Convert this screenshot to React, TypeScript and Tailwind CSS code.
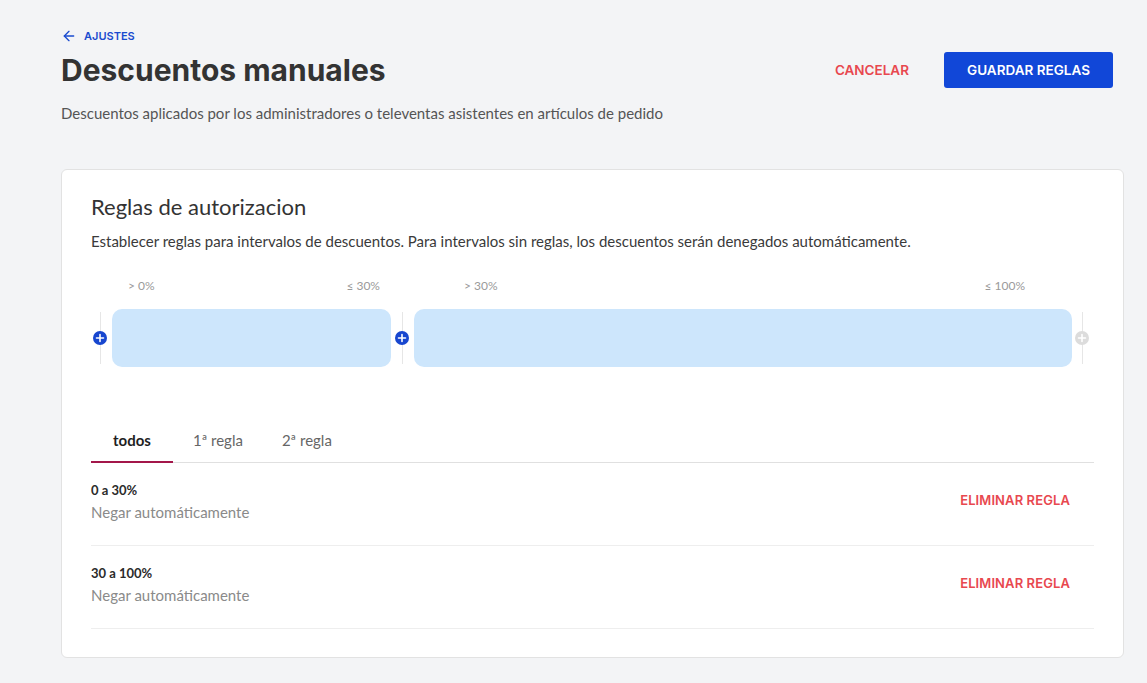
import { ArrowLeft } from "lucide-react";

const body = { fontFamily: "Lato, 'Noto Sans', sans-serif" };
const head = { fontFamily: "Inter, 'Noto Sans', sans-serif" };

function PlusDot({ muted = false }: { muted?: boolean }) {
  return (
    <div className="relative flex h-[58px] w-[14px] shrink-0 items-center justify-center">
      <div className="absolute top-[3px] bottom-[3px] left-1/2 w-px bg-[#e6e6e6]" />
      <svg viewBox="0 0 14 14" className="relative h-[14px] w-[14px]">
        <circle cx="7" cy="7" r="7" fill={muted ? "#dcdcdc" : "#1746cf"} />
        <path d="M7 3.5v7M3.5 7h7" stroke="#fff" strokeWidth="1.6" strokeLinecap="round" />
      </svg>
    </div>
  );
}

function RuleRow({ range }: { range: string }) {
  return (
    <div className="flex items-center justify-between border-b border-[#eeeeee] h-[83px]">
      <div style={body} className="-mt-[4px]">
        <div className="text-[13px] font-bold text-[#2b2b2b]">{range}</div>
        <div className="mt-[1px] text-[15px] text-[#8a8a8a]">Negar automáticamente</div>
      </div>
      <button style={head} className="-mt-[6px] mr-[24px] text-[13px] font-semibold tracking-[0.1px] text-[#e8484f]">
        ELIMINAR REGLA
      </button>
    </div>
  );
}

export default function App() {
  return (
    <div className="min-h-[683px] bg-[#f3f4f6] pl-[61px] pr-[23px] pt-[28px]">
      <div className="flex items-start justify-between">
        <div>
          <a style={head} className="flex items-center gap-[7px] text-[11px] font-semibold text-[#1a4bcf]">
            <ArrowLeft className="h-[16px] w-[16px]" strokeWidth={2} />
            AJUSTES
          </a>
          <h1 style={head} className="mt-[6px] text-[30px] font-bold leading-[38px] text-[#333333]">
            Descuentos manuales
          </h1>
        </div>
        <div className="mt-[24px] flex items-center gap-[35px] pr-[11px]">
          <button style={head} className="text-[13.5px] font-semibold text-[#e8484f]">CANCELAR</button>
          <button style={head} className="h-[36px] w-[169px] rounded-[3px] bg-[#1147d8] text-[13.5px] font-semibold text-white">
            GUARDAR REGLAS
          </button>
        </div>
      </div>
      <p style={body} className="mt-[13px] text-[15px] text-[#555555]">
        Descuentos aplicados por los administradores o televentas asistentes en artículos de pedido
      </p>

      <div className="mt-[45px] rounded-[6px] border border-[#e2e2e2] bg-white px-[29px] pt-[20px] pb-[28px]">
        <h2 style={body} className="text-[22px] text-[#333333]">Reglas de autorizacion</h2>
        <p style={body} className="mt-[7px] text-[15px] text-[#3a3a3a]">
          Establecer reglas para intervalos de descuentos. Para intervalos sin reglas, los descuentos serán denegados automáticamente.
        </p>

        <div className="mt-[24px] pl-[2px]" style={body}>
          <div className="flex text-[12px] text-[#9a9a9a]">
            <div className="flex w-[302px] justify-between pl-[35px] pr-[15px]">
              <span>&gt; 0%</span>
              <span>≤ 30%</span>
            </div>
            <div className="flex w-[694px] justify-between pl-[69px] pr-[64px]">
              <span>&gt; 30%</span>
              <span>≤ 100%</span>
            </div>
          </div>
          <div className="mt-[14px] flex items-center">
            <PlusDot />
            <div className="ml-[5px] h-[58px] w-[279px] rounded-[10px] bg-[#cde6fc]" />
            <div className="ml-[4px]"><PlusDot /></div>
            <div className="ml-[5px] h-[58px] w-[658px] rounded-[10px] bg-[#cde6fc]" />
            <div className="ml-[3px]"><PlusDot muted /></div>
          </div>
        </div>

        <div className="mt-[62px] flex border-b border-[#e0e0e0]" style={body}>
          <div className="mb-[-1px] flex w-[82px] justify-center border-b-2 border-[#a3174a] pb-[10px] text-[15px] font-bold text-[#1f1f1f]">
            todos
          </div>
          <div className="ml-[20px] pb-[10px] text-[15px] text-[#666666]">1ª regla</div>
          <div className="ml-[39px] pb-[10px] text-[15px] text-[#666666]">2ª regla</div>
        </div>

        <RuleRow range="0 a 30%" />
        <RuleRow range="30 a 100%" />
      </div>
    </div>
  );
}
